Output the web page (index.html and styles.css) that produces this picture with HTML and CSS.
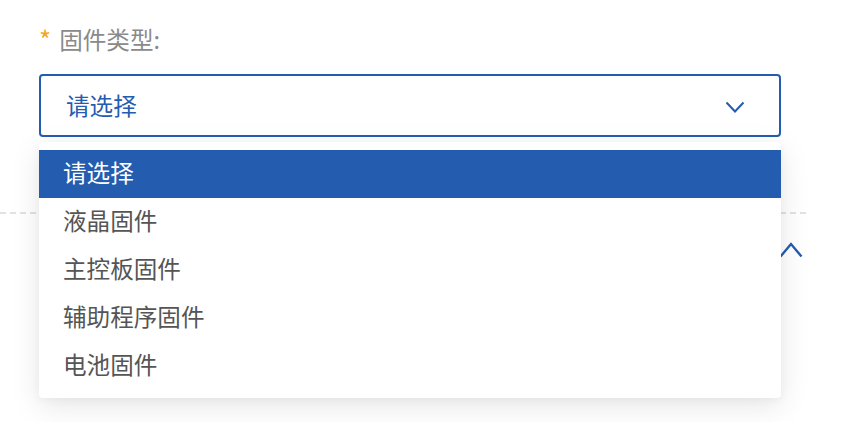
FILE: index.html
```html
<!DOCTYPE html>
<html lang="zh">
<head>
<meta charset="utf-8">
<link rel="stylesheet" href="styles.css">
</head>
<body>
<div class="page">
  <div class="field">
    <div class="label"><span class="req">*</span><span class="label-text">固件类型:</span></div>
    <div class="select">
      <span class="select-value">请选择</span>
      <svg class="chev-down" width="20" height="12" viewBox="0 0 20 12"><polyline points="1.5,1.5 10,10.5 18.5,1.5" fill="none" stroke="#245cb0" stroke-width="2"/></svg>
    </div>
  </div>
  <div class="divider"></div>
  <div class="toggle-row">
    <svg class="chev-up" width="24" height="18" viewBox="0 0 24 18"><polyline points="1.5,15.5 12,3 22.5,15.5" fill="none" stroke="#245cb0" stroke-width="2.4"/></svg>
  </div>
  <ul class="dropdown">
    <li class="option active">请选择</li>
    <li class="option">液晶固件</li>
    <li class="option">主控板固件</li>
    <li class="option">辅助程序固件</li>
    <li class="option">电池固件</li>
  </ul>
</div>
</body>
</html>
```

FILE: styles.css
```css
* { box-sizing: border-box; }
html, body { margin: 0; padding: 0; background: #fff; }
body {
  width: 850px;
  height: 422px;
  overflow: hidden;
  font-family: "Noto Sans CJK SC", "Noto Sans", sans-serif;
}
.page {
  position: relative;
  padding-top: 25px;
}
.field {
  padding-left: 39px;
  width: 781px;
}
.label {
  display: flex;
  align-items: center;
  height: 28px;
  font-size: 23.6px;
  line-height: 28px;
  color: #8a8a8a;
}
.req {
  color: #f5a623;
  font-size: 26px;
  margin-right: 8px;
  position: relative;
  top: 0;
}
.select {
  margin-top: 21px;
  height: 63px;
  border: 2px solid #245cb0;
  border-radius: 4px;
  display: flex;
  align-items: center;
  justify-content: space-between;
  padding: 0 34px 0 25px;
}
.select-value {
  font-size: 23.6px;
  color: #245cb0;
  line-height: 28px;
  position: relative;
  top: -1px;
}
.chev-down { display: block; margin-top: 2px; }
.divider {
  margin-top: 75px;
  width: 807px;
  height: 2px;
  background: repeating-linear-gradient(to right, #e2e2e2 0 6px, transparent 6px 10px);
}
.toggle-row {
  margin-top: 27px;
  width: 803px;
  display: flex;
  justify-content: flex-end;
}
.chev-up { display: block; }
.dropdown {
  position: absolute;
  top: 142px;
  left: 39px;
  width: 742px;
  margin: 0;
  padding: 8px 0;
  list-style: none;
  background: #fff;
  border-radius: 4px;
  box-shadow: 0 8px 30px rgba(0, 0, 0, 0.10), 0 2px 8px rgba(0, 0, 0, 0.04);
}
.option {
  height: 48px;
  line-height: 45px;
  padding-left: 24px;
  font-size: 23.6px;
  color: #555;
}
.option.active {
  background: #245cb0;
  color: #fff;
}
```
